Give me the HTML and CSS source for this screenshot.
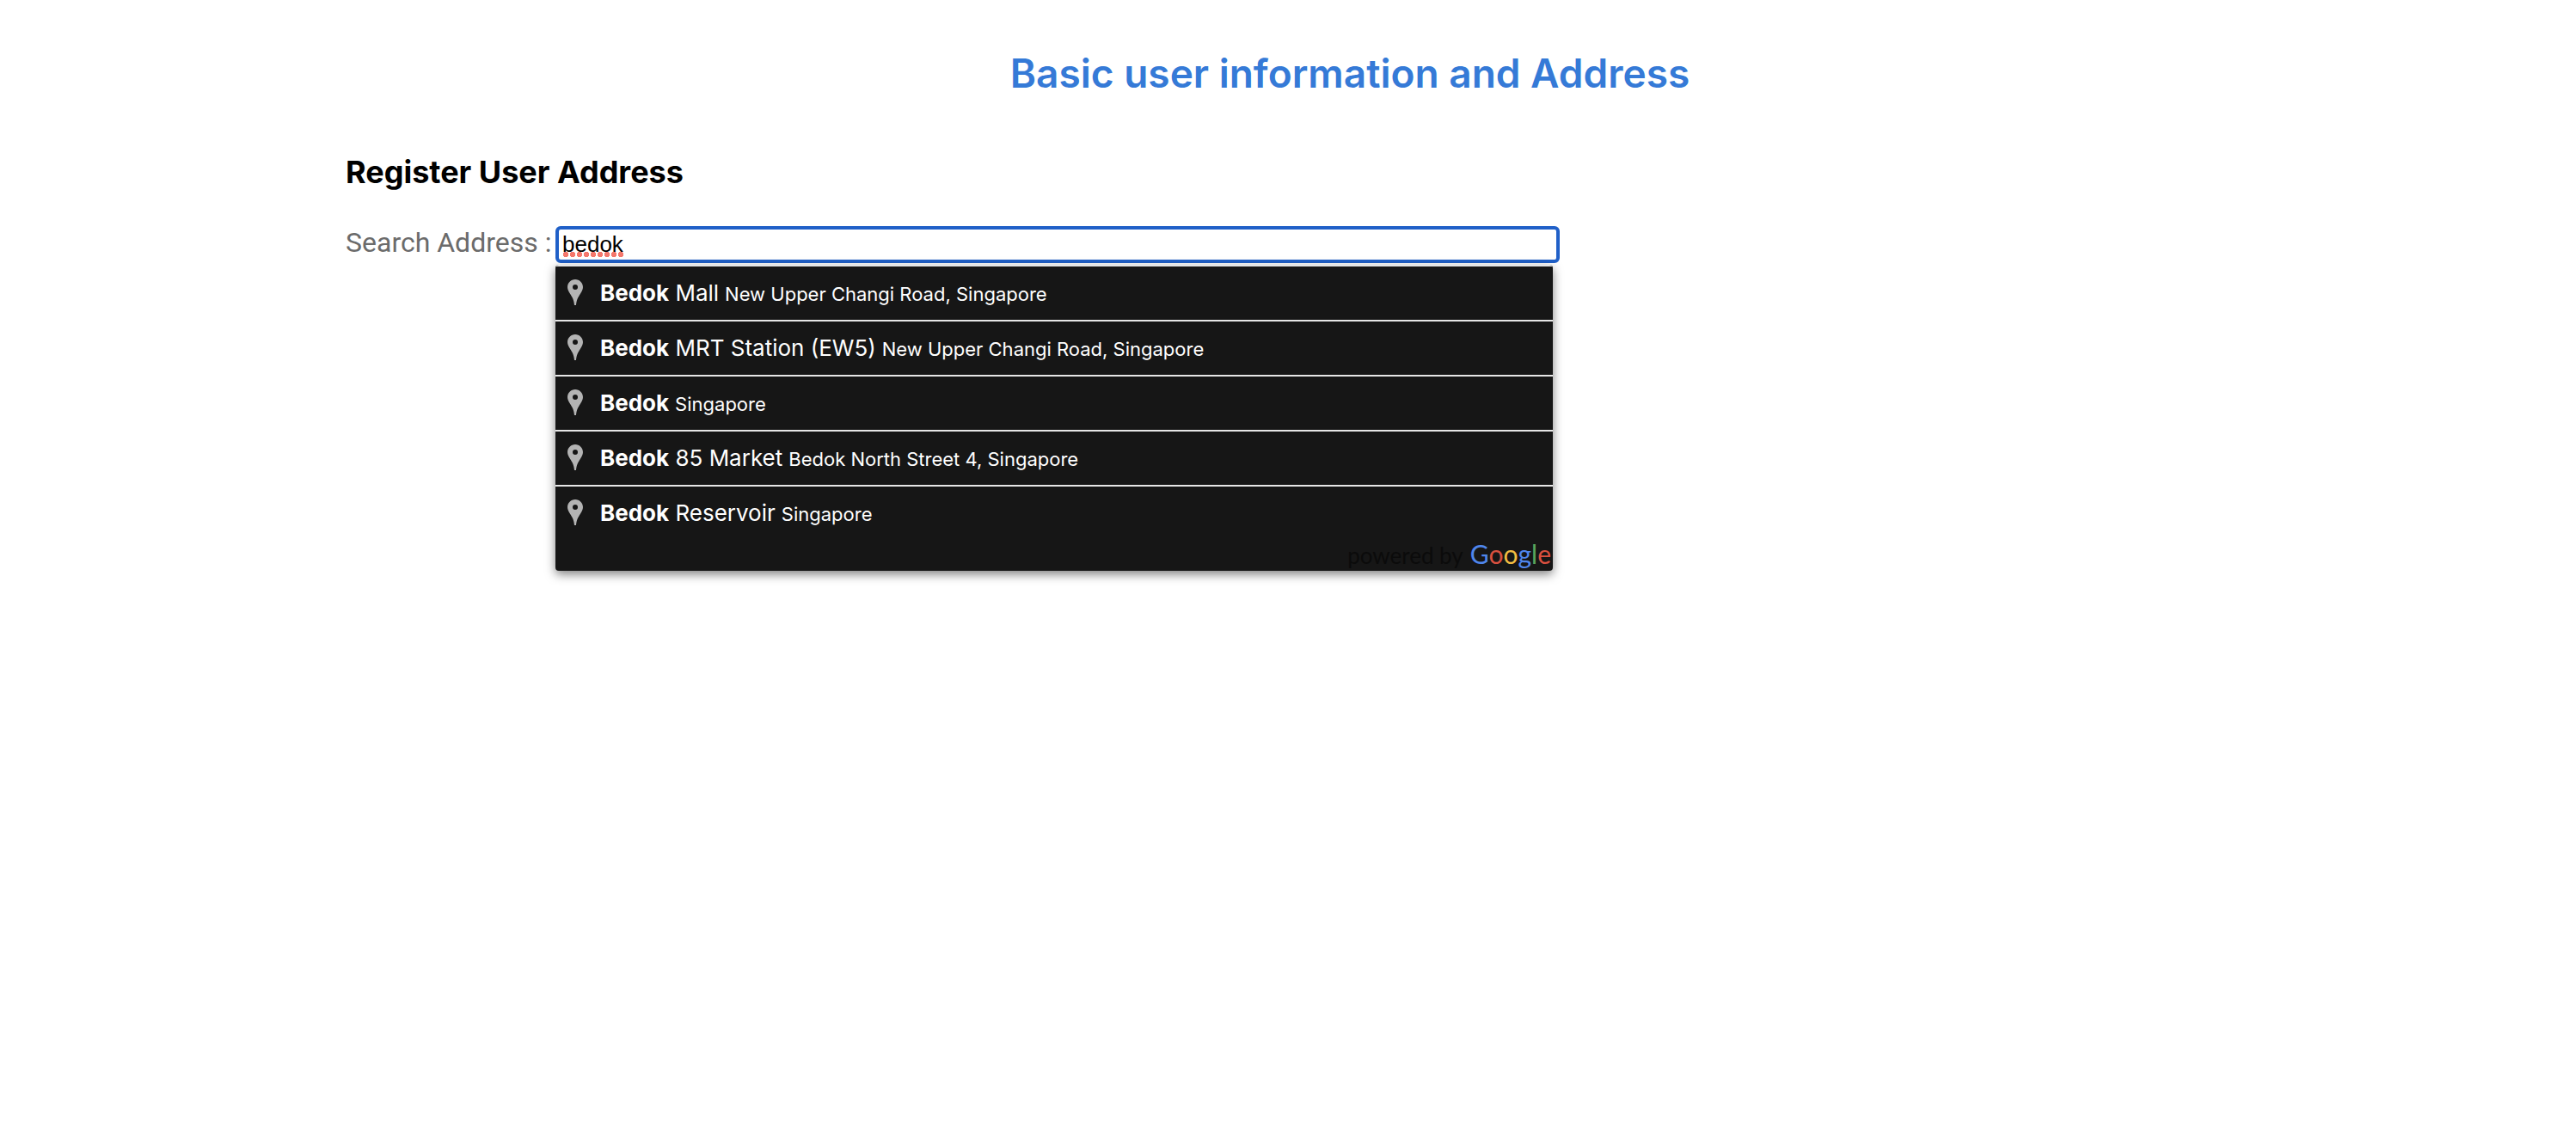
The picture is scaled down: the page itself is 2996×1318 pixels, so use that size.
FILE: index.html
```html
<!DOCTYPE html>
<html lang="en">
<head>
<meta charset="utf-8">
<meta name="viewport" content="width=device-width, initial-scale=1">
<title>Basic user information and Address</title>
<link rel="stylesheet" href="styles.css">
</head>
<body>
<svg width="0" height="0" class="sprite" aria-hidden="true">
  <symbol id="pin" viewBox="0 0 18 30">
    <path fill-rule="evenodd" d="M9 0C4 0 0 4 0 9c0 3 1.500 5 3.200 8C5.800 21 7.500 24 8 30h2c.5-6 2.200-9 4.800-13C16.500 14 18 12 18 9c0-5-4-9-9-9zm0 6a3 3 0 1 1 0 6 3 3 0 0 1 0-6z"/>
  </symbol>
</svg>
<main class="page">
  <h1 class="title">Basic user information and Address</h1>
  <h2 class="subtitle">Register User Address</h2>
  <form class="field">
    <label class="field-label" for="address">Search Address :</label>
    <div class="search">
      <input class="search-input" id="address" type="text" value="bedok" autocomplete="off" spellcheck="false">
      <div class="suggestions">
        <ul class="list">
          <li class="item"><svg class="pin"><use href="#pin"/></svg><span class="place"><b>Bedok</b> Mall</span><span class="area">New Upper Changi Road, Singapore</span></li>
          <li class="item"><svg class="pin"><use href="#pin"/></svg><span class="place"><b>Bedok</b> MRT Station (EW5)</span><span class="area">New Upper Changi Road, Singapore</span></li>
          <li class="item"><svg class="pin"><use href="#pin"/></svg><span class="place"><b>Bedok</b></span><span class="area">Singapore</span></li>
          <li class="item"><svg class="pin"><use href="#pin"/></svg><span class="place"><b>Bedok</b> 85 Market</span><span class="area">Bedok North Street 4, Singapore</span></li>
          <li class="item"><svg class="pin"><use href="#pin"/></svg><span class="place"><b>Bedok</b> Reservoir</span><span class="area">Singapore</span></li>
        </ul>
        <div class="credit"><span class="powered">powered by</span><span class="brand"><span class="blue">G</span><span class="red">o</span><span class="yellow">o</span><span class="blue">g</span><span class="green">l</span><span class="red">e</span></span></div>
      </div>
    </div>
  </form>
</main>
</body>
</html>
```

FILE: styles.css
```css
* { box-sizing: border-box; }
body {
  margin: 0;
  background: #fff;
  color: #000;
  font-family: Inter, "Liberation Sans", sans-serif;
}
.sprite { position: absolute; }
.page {
  min-height: 100vh;
  padding: 55px 258px 56px 402px;
}
.title {
  margin: 0;
  color: #357ad7;
  font-size: 46px;
  line-height: 60px;
  font-weight: 600;
  text-align: center;
}
.subtitle {
  margin: 60px 0 0;
  font-size: 36px;
  line-height: 50px;
  font-weight: 700;
}
.field {
  display: flex;
  align-items: flex-start;
  margin-top: 38px;
}
.field-label {
  flex: none;
  width: 244px;
  color: #6b6b6b;
  font: 32px/38px Roboto, sans-serif;
  white-space: nowrap;
}
.search {
  position: relative;
  width: 50%;
}
.search-input {
  display: block;
  width: 100%;
  height: 43px;
  padding: 0 4px;
  border: 4px solid #2060c8;
  border-radius: 6px;
  outline: none;
  color: #000;
  font: 26px "Liberation Sans", Arial, sans-serif;
  /* spelling mark under the typed word */
  background-color: #fff;
  background-image: linear-gradient(to right, #fff 4px, transparent 4px 76px, #fff 76px), radial-gradient(circle, #f4776c 3px, transparent 3px);
  background-size: auto, 8px 6px;
  background-position: 0 0, 4px 26px;
  background-repeat: no-repeat, repeat-x;
}
.suggestions {
  position: absolute;
  top: 100%;
  left: 0;
  right: 8px;
  margin-top: 2px;
  background: #161616;
  border-radius: 4px;
  box-shadow: 0 4px 12px rgba(0, 0, 0, .5);
  color: #fff;
  overflow: hidden;
}
.list { margin: 0; padding: 0; list-style: none; }
.item {
  display: flex;
  align-items: baseline;
  height: 64px;
  border-top: 2px solid #e6e6e6;
  padding-left: 14px;
  line-height: 62px;
  white-space: nowrap;
}
.pin {
  align-self: flex-start;
  width: 18px;
  height: 30px;
  margin: 15px 20px 0 0;
  fill: #b4b4b4;
}
.place { font-size: 26px; }
.place b { font-weight: 700; }
.area { margin-left: 7px; font-size: 22px; }
.credit {
  display: flex;
  justify-content: flex-end;
  align-items: baseline;
  height: 36px;
  padding-right: 2px;
  gap: 8px;
  font-family: Lato, sans-serif;
  line-height: 32px;
}
.powered { color: #0b0b0b; font-size: 26px; }
.brand { font-size: 30px; }
.blue { color: #4f86ec; }
.red { color: #d9503f; }
.yellow { color: #f2bd42; }
.green { color: #58a55c; }
```
